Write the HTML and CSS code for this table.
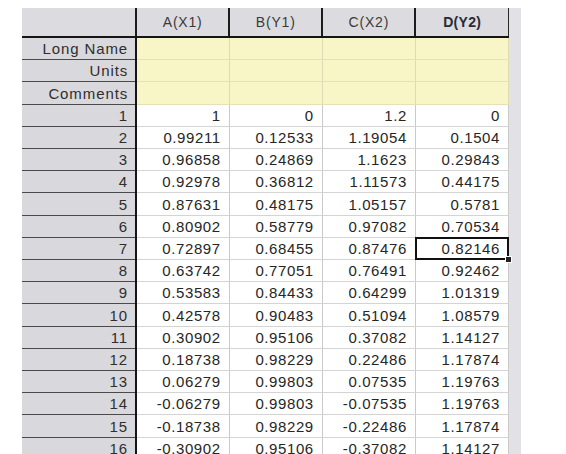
FILE: index.html
```html
<!DOCTYPE html>
<html>
<head>
<meta charset="utf-8">
<link rel="stylesheet" href="styles.css">
</head>
<body>
<div class="sheet">
  <table class="grid">
    <colgroup>
      <col class="c-rh"><col class="c-d"><col class="c-d"><col class="c-d"><col class="c-d">
    </colgroup>
    <thead>
      <tr>
        <th class="corner"></th>
        <th>A(X1)</th>
        <th>B(Y1)</th>
        <th>C(X2)</th>
        <th class="bold">D(Y2)</th>
      </tr>
    </thead>
    <tbody>
      <tr class="meta"><th>Long Name</th><td></td><td></td><td></td><td></td></tr>
      <tr class="meta"><th>Units</th><td></td><td></td><td></td><td></td></tr>
      <tr class="meta"><th>Comments</th><td></td><td></td><td></td><td></td></tr>
      <tr><th>1</th><td>1</td><td>0</td><td>1.2</td><td>0</td></tr>
      <tr><th>2</th><td>0.99211</td><td>0.12533</td><td>1.19054</td><td>0.1504</td></tr>
      <tr><th>3</th><td>0.96858</td><td>0.24869</td><td>1.1623</td><td>0.29843</td></tr>
      <tr><th>4</th><td>0.92978</td><td>0.36812</td><td>1.11573</td><td>0.44175</td></tr>
      <tr><th>5</th><td>0.87631</td><td>0.48175</td><td>1.05157</td><td>0.5781</td></tr>
      <tr><th>6</th><td>0.80902</td><td>0.58779</td><td>0.97082</td><td>0.70534</td></tr>
      <tr><th>7</th><td>0.72897</td><td>0.68455</td><td>0.87476</td><td class="active"><span class="sel"></span><span class="handle"></span>0.82146</td></tr>
      <tr><th>8</th><td>0.63742</td><td>0.77051</td><td>0.76491</td><td>0.92462</td></tr>
      <tr><th>9</th><td>0.53583</td><td>0.84433</td><td>0.64299</td><td>1.01319</td></tr>
      <tr><th>10</th><td>0.42578</td><td>0.90483</td><td>0.51094</td><td>1.08579</td></tr>
      <tr><th>11</th><td>0.30902</td><td>0.95106</td><td>0.37082</td><td>1.14127</td></tr>
      <tr><th>12</th><td>0.18738</td><td>0.98229</td><td>0.22486</td><td>1.17874</td></tr>
      <tr><th>13</th><td>0.06279</td><td>0.99803</td><td>0.07535</td><td>1.19763</td></tr>
      <tr><th>14</th><td>-0.06279</td><td>0.99803</td><td>-0.07535</td><td>1.19763</td></tr>
      <tr><th>15</th><td>-0.18738</td><td>0.98229</td><td>-0.22486</td><td>1.17874</td></tr>
      <tr><th>16</th><td>-0.30902</td><td>0.95106</td><td>-0.37082</td><td>1.14127</td></tr>
    </tbody>
  </table>
  <div class="strip"></div>
</div>
</body>
</html>
```

FILE: styles.css
```css
html, body {
  margin: 0;
  padding: 0;
  background: #ffffff;
  overflow: hidden;
}
body {
  width: 566px;
  height: 454px;
  font-family: "Liberation Sans", Arial, sans-serif;
}
.sheet {
  display: flex;
  align-items: stretch;
  padding: 8px 0 0 22px;
  height: 460px;
  box-sizing: border-box;
}
.grid {
  border-collapse: collapse;
  table-layout: fixed;
  width: 487px;
}
.c-rh { width: 114px; }
.c-d { width: 93px; }

.grid thead th {
  height: 28px;
  background: #dcdce0;
  color: #3a3a3a;
  font-weight: normal;
  font-size: 14px;
  letter-spacing: 0.8px;
  text-align: center;
  border-right: 2px solid #1c1c1c;
  border-bottom: 2px solid #151515;
  padding: 0;
}
.grid thead th.bold { font-weight: bold; color: #2a2a36; letter-spacing: 0.3px; }
.grid thead th:last-child { border-right: 1px solid #2a2a2a; }

.grid tbody th {
  height: 21px;
  background: #d9d9dd;
  color: #2e2e2e;
  font-weight: normal;
  font-size: 15px;
  letter-spacing: 0.9px;
  text-align: right;
  padding: 0 7px 0 0;
  border-right: 2px solid #151515;
  border-bottom: 1px solid #4a4a4a;
  white-space: nowrap;
}
.grid tbody td {
  height: 21px;
  padding: 0 8px 0 0;
  text-align: right;
  font-size: 15px;
  letter-spacing: 0.6px;
  color: #262626;
  background: #ffffff;
  border-right: 1px solid #cacaca;
  border-bottom: 1px solid #d4d4d4;
  white-space: nowrap;
}
.grid tbody tr.meta td {
  background: #f8f6c6;
  border-right-color: #dedbb0;
  border-bottom-color: #e4e1b6;
}
.grid td.active {
  position: relative;
}
.sel {
  position: absolute;
  left: -1px;
  top: -1px;
  right: -1px;
  bottom: -1px;
  border: 2px solid #111111;
}
.handle {
  position: absolute;
  right: -4px;
  bottom: -4px;
  width: 5px;
  height: 5px;
  background: #222222;
  border: 1px solid #ffffff;
}
.strip {
  width: 12px;
  background: #e2e2e6;
}
```
